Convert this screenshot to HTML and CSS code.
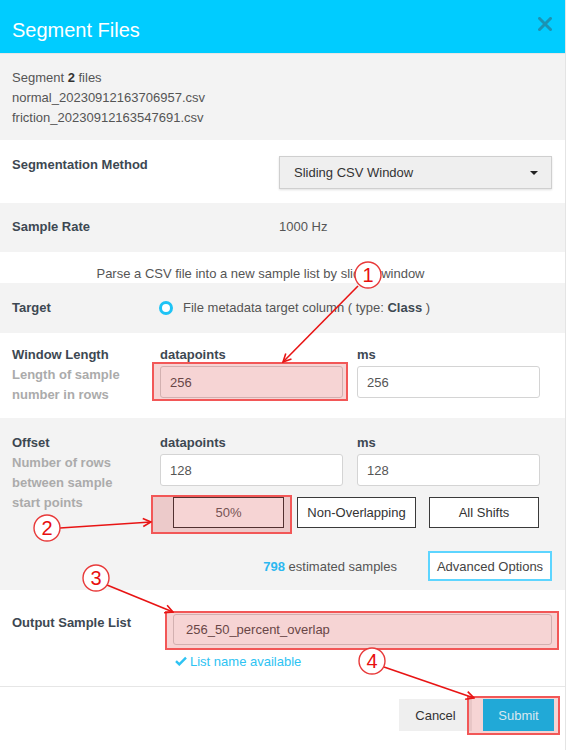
FILE: index.html
```html
<!DOCTYPE html>
<html>
<head>
<meta charset="utf-8">
<title>Segment Files</title>
<link rel="stylesheet" href="styles.css">
</head>
<body>
<div class="modal">
  <header class="modal-header">
    <h1 class="title">Segment Files</h1>
    <span class="close" aria-label="Close">
      <svg width="14" height="14" viewBox="0 0 14 14"><path d="M1.5 1.5 L12.5 12.5 M12.5 1.5 L1.5 12.5" stroke="currentColor" stroke-width="3" stroke-linecap="square"/></svg>
    </span>
  </header>

  <section class="info gray">
    <div>Segment <b>2</b> files</div>
    <div>normal_20230912163706957.csv</div>
    <div>friction_20230912163547691.csv</div>
  </section>

  <section class="row-method">
    <div class="label">Segmentation Method</div>
    <div class="select"><span>Sliding CSV Window</span><span class="caret"></span></div>
  </section>

  <section class="row-rate gray">
    <div class="label">Sample Rate</div>
    <div class="value">1000 Hz</div>
  </section>

  <section class="desc">Parse a CSV file into a new sample list by sliding window</section>

  <section class="row-target gray">
    <div class="label">Target</div>
    <div class="radio-opt"><span class="radio"></span><span>File metadata target column ( type: <b>Class</b> )</span></div>
  </section>

  <section class="row-window">
    <div class="label-block">
      <div class="label">Window Length</div>
      <div class="sub">Length of sample<br>number in rows</div>
    </div>
    <div class="field">
      <div class="field-label">datapoints</div>
      <input class="input" type="text" value="256">
    </div>
    <div class="field">
      <div class="field-label">ms</div>
      <input class="input" type="text" value="256">
    </div>
  </section>

  <section class="row-offset gray">
    <div class="offset-grid">
      <div class="label-block span2">
        <div class="label">Offset</div>
        <div class="sub">Number of rows<br>between sample<br>start points</div>
      </div>
      <div class="field">
        <div class="field-label">datapoints</div>
        <input class="input" type="text" value="128">
      </div>
      <div class="field">
        <div class="field-label">ms</div>
        <input class="input" type="text" value="128">
      </div>
      <div class="presets">
        <button class="preset w50">50%</button>
        <button class="preset wnon">Non-Overlapping</button>
        <button class="preset wall">All Shifts</button>
      </div>
    </div>
    <div class="estimate-row">
      <span class="estimate"><b class="count">798</b> estimated samples</span>
      <button class="adv">Advanced Options</button>
    </div>
  </section>

  <section class="row-output">
    <div class="label">Output Sample List</div>
    <div class="output-col">
      <input class="input out-input" type="text" value="256_50_percent_overlap">
      <div class="available">
        <svg width="12" height="10" viewBox="0 0 12 10"><path d="M1 5.2 L4.3 8.4 L11 1.6" fill="none" stroke="currentColor" stroke-width="2.4"/></svg>
        <span>List name available</span>
      </div>
    </div>
  </section>

  <footer class="modal-footer">
    <button class="btn-cancel">Cancel</button>
    <button class="btn-submit">Submit</button>
  </footer>
</div>

<svg class="annotations" width="567" height="750" viewBox="0 0 567 750">
  <defs>
    <marker id="ah" markerWidth="10" markerHeight="10" refX="9" refY="5" orient="auto" markerUnits="userSpaceOnUse">
      <path d="M1 1 L9 5 L1 9" fill="none" stroke="#e81414" stroke-width="1.6"/>
    </marker>
  </defs>
  <g fill="rgba(200,0,0,0.17)" stroke="#f25757" stroke-width="2">
    <rect x="153" y="363" width="194" height="37"/>
    <rect x="152" y="496" width="139" height="37"/>
    <rect x="166" y="612" width="392" height="37"/>
    <path fill-rule="evenodd" d="M468 697 H559 V734 H468 Z M483 699 H554 V731 H483 Z" stroke="none"/>
    <rect x="468" y="697" width="91" height="37" fill="none"/>
  </g>
  <g stroke="#e81414" stroke-width="1.6" fill="none" marker-end="url(#ah)">
    <line x1="358" y1="286" x2="283" y2="362"/>
    <line x1="60" y1="528" x2="151" y2="522"/>
    <line x1="107" y1="585" x2="173" y2="612"/>
    <line x1="384" y1="667" x2="474" y2="698"/>
  </g>
  <g fill="#fff" stroke="#e83a3a" stroke-width="1.4">
    <circle cx="368" cy="275" r="13"/>
    <circle cx="47" cy="528" r="13"/>
    <circle cx="96" cy="578" r="13"/>
    <circle cx="372" cy="661" r="13"/>
  </g>
  <g class="anno-num" text-anchor="middle">
    <text x="368" y="282">1</text>
    <text x="47" y="535">2</text>
    <text x="96" y="585">3</text>
    <text x="372" y="668">4</text>
  </g>
</svg>
</body>
</html>
```

FILE: styles.css
```css
* { box-sizing: border-box; }

body {
  margin: 0;
  width: 567px;
  height: 750px;
  overflow: hidden;
  position: relative;
  background: #fff;
  font-family: "Liberation Sans", Arial, sans-serif;
  font-size: 13px;
  color: #555;
}

.modal {
  width: 566px;
  height: 750px;
  border-right: 1px solid #e4e4e4;
  background: #fff;
}

.modal-header {
  height: 54px;
  background: #00ccff;
  border-bottom: 1px solid #e6e6e6;
  display: flex;
  justify-content: space-between;
  align-items: flex-start;
  padding: 0 13px 0 12px;
}

.title {
  margin: 20px 0 0;
  font-size: 20px;
  line-height: 20px;
  font-weight: normal;
  color: #fff;
}

.close {
  margin-top: 17px;
  color: #1b93b3;
  display: block;
  line-height: 0;
}

.gray { background: #f3f3f3; }

.info {
  padding: 14px 12px 12px;
  line-height: 20px;
}
.info b { color: #333; }

.label {
  font-weight: bold;
  color: #3d4852;
  line-height: 18px;
}

.row-method {
  display: grid;
  grid-template-columns: 267px 1fr;
  padding: 16px 13px 14px 12px;
}

.select {
  height: 33px;
  background: #efefef;
  border: 1px solid #cfcfcf;
  box-shadow: 0 1px 2px rgba(0, 0, 0, 0.12);
  display: flex;
  align-items: center;
  justify-content: space-between;
  padding: 0 13px 0 14px;
  color: #333;
}

.caret {
  width: 0;
  height: 0;
  border-left: 4px solid transparent;
  border-right: 4px solid transparent;
  border-top: 4px solid #222;
}

.row-rate {
  display: grid;
  grid-template-columns: 267px 1fr;
  padding: 15px 12px 16px;
  line-height: 18px;
}

.desc {
  height: 31px;
  padding: 13px 44px 0 0;
  text-align: center;
  line-height: 18px;
}

.row-target {
  display: grid;
  grid-template-columns: 147px 1fr;
  padding: 16px 12px;
  line-height: 18px;
}

.radio-opt {
  display: flex;
  align-items: center;
  gap: 10px;
}
.radio-opt b { color: #3d4852; }

.radio {
  width: 14px;
  height: 14px;
  border: 3px solid #1ec3f5;
  border-radius: 50%;
  background: #fff;
}

.row-window {
  display: grid;
  grid-template-columns: 134px 183px 183px;
  column-gap: 14px;
  padding: 12px 12px 13px;
}

.label-block { line-height: 20px; }
.label-block .label { line-height: 20px; }

.sub {
  font-weight: bold;
  color: #ababab;
}

.field-label {
  font-weight: bold;
  color: #3d4852;
  line-height: 20px;
}

.input {
  display: block;
  width: 100%;
  height: 32px;
  margin: 1px 0 0;
  border: 1px solid #d4d4d4;
  border-radius: 3px;
  background: #fff;
  padding: 0 9px;
  font-family: inherit;
  font-size: 13px;
  color: #555;
  outline: none;
}

.row-offset {
  padding: 15px 13px 9px 12px;
}

.offset-grid {
  display: grid;
  grid-template-columns: 134px 183px 183px;
  column-gap: 14px;
  row-gap: 11px;
}

.span2 { grid-row: 1 / 3; }

.presets {
  grid-column: 2 / 4;
  display: flex;
  gap: 13px;
  padding-left: 13px;
}

.preset {
  height: 31px;
  border: 1px solid #3a3a3a;
  background: #fff;
  font-family: inherit;
  font-size: 13px;
  color: #333;
  padding: 0;
}
.w50 { width: 111px; color: #666; }
.wnon { width: 119px; }
.wall { width: 110px; }

.estimate-row {
  margin-top: 23px;
  display: flex;
  justify-content: flex-end;
  align-items: center;
  gap: 31px;
}

.estimate { line-height: 18px; margin-top: 2px; }
.count { color: #2cb8f0; }

.adv {
  height: 30px;
  width: 124px;
  border: 2px solid #5dd5ff;
  background: #fff;
  font-family: inherit;
  font-size: 13px;
  color: #444;
  padding: 0;
}

.row-output {
  display: grid;
  grid-template-columns: 161px 1fr;
  padding: 23px 13px 15px 12px;
}
.row-output .label { line-height: 20px; }

.out-input {
  height: 31px;
  padding: 0 12px;
  background: #fff;
}

.available {
  margin: 6px 0 0 2px;
  height: 20px;
  display: flex;
  align-items: center;
  gap: 3px;
  color: #2ec3f3;
}

.modal-footer {
  border-top: 1px solid #e6e6e6;
  display: flex;
  justify-content: flex-end;
  gap: 11px;
  padding: 12px 11px 0 0;
}

.btn-cancel,
.btn-submit {
  height: 32px;
  border: none;
  font-family: inherit;
  font-size: 13px;
}

.btn-cancel {
  width: 73px;
  background: #efefef;
  color: #333;
}

.btn-submit {
  width: 71px;
  background: #21a9d7;
  color: #d9e8ef;
}

.annotations {
  position: absolute;
  left: 0;
  top: 0;
  pointer-events: none;
}

.anno-num {
  font-family: "Liberation Sans", Arial, sans-serif;
  font-size: 20px;
  fill: #e80f0f;
}
```
